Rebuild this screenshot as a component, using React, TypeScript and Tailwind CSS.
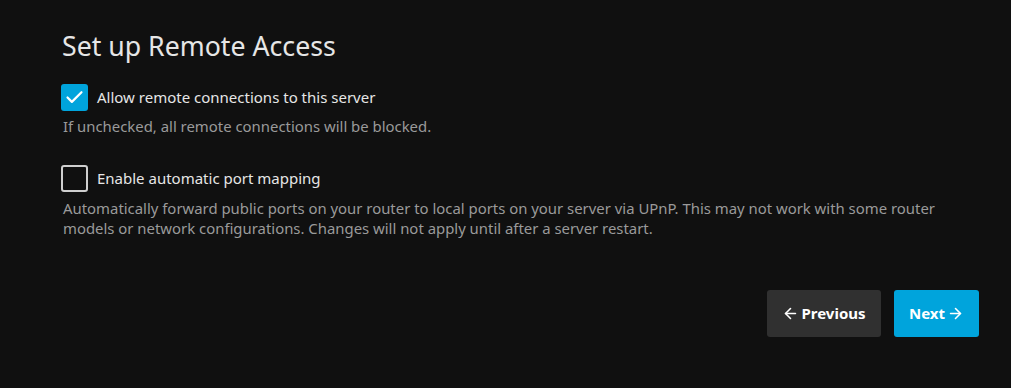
import { Check, ArrowLeft, ArrowRight } from 'lucide-react';

export default function App() {
  return (
    <div className="w-[1011px] h-[388px] bg-[#101010] text-[#e6e6e6] font-['Noto_Sans',sans-serif] overflow-hidden">
      <div className="pl-[61px] pr-[32px] pt-[27px]">
        <h1 className="text-[26.7px] leading-[38px] font-normal pl-[1px]">Set up Remote Access</h1>

        {/* remote connections */}
        <div className="mt-[19px]">
          <label className="flex items-center gap-[9px]">
            <span className="w-[27px] h-[27px] rounded-[3px] bg-[#00a4dc] flex items-center justify-center">
              <Check size={21} strokeWidth={2.5} className="text-white" />
            </span>
            <span className="text-[15px]">Allow remote connections to this server</span>
          </label>
          <p className="mt-[5px] pl-[2px] text-[14.9px] leading-[20px] text-[#9a9a9a]">
            If unchecked, all remote connections will be blocked.
          </p>
        </div>

        {/* port mapping */}
        <div className="mt-[29px]">
          <label className="flex items-center gap-[9px]">
            <span className="w-[27px] h-[27px] rounded-[3px] border-2 border-[#cfcfcf]" />
            <span className="text-[15px]">Enable automatic port mapping</span>
          </label>
          <p className="mt-[6px] pl-[2px] text-[14.9px] leading-[20px] text-[#9a9a9a] max-w-[892px]">
            Automatically forward public ports on your router to local ports on your server via UPnP. This may not work with some router models or network configurations. Changes will not apply until after a server restart.
          </p>
        </div>

        <div className="flex justify-end gap-[13px] mt-[52px]">
          <button className="h-[47px] w-[114px] rounded-[3px] bg-[#303030] text-white text-[15px] font-bold flex items-center justify-center gap-[2px]">
            <ArrowLeft size={17} strokeWidth={2.25} />
            Previous
          </button>
          <button className="h-[47px] w-[85px] rounded-[3px] bg-[#00a4dc] text-white text-[15px] font-bold flex items-center justify-center gap-[2px]">
            Next
            <ArrowRight size={17} strokeWidth={2.25} />
          </button>
        </div>
      </div>
    </div>
  );
}
